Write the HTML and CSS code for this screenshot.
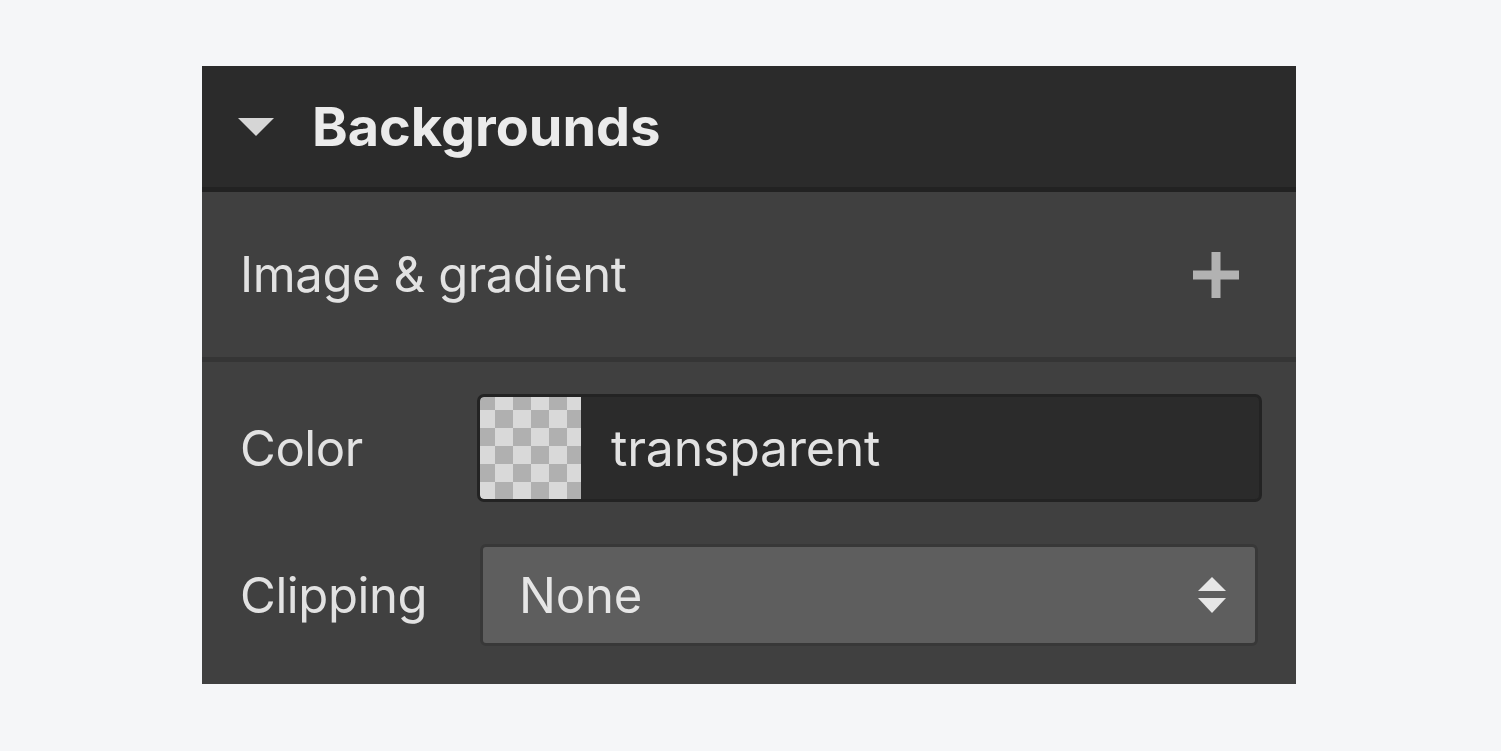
FILE: index.html
```html
<!DOCTYPE html>
<html>
<head>
<meta charset="utf-8">
<link rel="stylesheet" href="styles.css">
</head>
<body>
<div class="panel">
  <div class="header">
    <span class="caret"></span>
    <span class="title">Backgrounds</span>
  </div>
  <div class="section">
    <span class="label">Image &amp; gradient</span>
    <svg class="plus" width="46" height="46" viewBox="0 0 46 46"><rect x="18.5" y="0" width="9" height="46" fill="#b2b2b2"/><rect x="0" y="18.5" width="46" height="9" fill="#b2b2b2"/></svg>
  </div>
  <div class="props">
    <span class="label">Color</span>
    <div class="color-input">
      <span class="swatch"></span>
      <span class="value">transparent</span>
    </div>
    <span class="label">Clipping</span>
    <div class="select">
      <span class="value">None</span>
      <svg class="updown" width="28" height="36" viewBox="0 0 28 36"><polygon points="14,0 28,14 0,14" fill="#e6e6e6"/><polygon points="0,21 28,21 14,36" fill="#e6e6e6"/></svg>
    </div>
  </div>
</div>
</body>
</html>
```
FILE: styles.css
```css
html, body {
  margin: 0;
  padding: 0;
  background: #f5f6f8;
}
body {
  font-family: Inter, "Noto Sans", sans-serif;
  width: 1501px;
  height: 751px;
  overflow: hidden;
}
.panel {
  margin: 66px 0 0 202px;
  width: 1094px;
  height: 618px;
  background: #404040;
  display: flex;
  flex-direction: column;
}
.header {
  height: 121px;
  background: #2b2b2b;
  border-bottom: 5px solid #222222;
  display: flex;
  align-items: center;
  padding-left: 36px;
}
.caret {
  width: 0;
  height: 0;
  border-left: 18.5px solid transparent;
  border-right: 18.5px solid transparent;
  border-top: 18px solid #d6d6d6;
  margin-right: 38px;
}
.title {
  font-size: 54px;
  font-weight: 700;
  color: #ebebeb;
}
.section {
  height: 165px;
  border-bottom: 5px solid #353535;
  display: flex;
  align-items: center;
  justify-content: space-between;
  padding: 0 57px 0 38px;
}
.label {
  font-size: 49px;
  letter-spacing: -0.4px;
  color: #e2e2e2;
}
.plus {
  display: block;
}
.props {
  display: grid;
  grid-template-columns: 237px 1fr;
  grid-template-rows: 108px 102px;
  row-gap: 42px;
  align-items: center;
  padding: 32px 34px 0 38px;
}
.color-input {
  height: 108px;
  box-sizing: border-box;
  border: 3px solid #232323;
  border-radius: 7px;
  background: #2b2b2b;
  display: flex;
  align-items: center;
  overflow: hidden;
}
.swatch {
  width: 101px;
  height: 100%;
  background: repeating-conic-gradient(#d9d9d9 0 25%, #b0b0b0 0 50%);
  background-size: 36px 36px;
  background-position: -3px -5px;
  border-radius: 4px 0 0 4px;
}
.color-input .value {
  margin-left: 30px;
  font-size: 50px;
  letter-spacing: -0.2px;
  color: #e2e2e2;
}
.select {
  height: 102px;
  margin: 0 4px 0 3px;
  box-sizing: border-box;
  border: 3px solid #383838;
  border-radius: 6px;
  background: #5e5e5e;
  display: flex;
  align-items: center;
  justify-content: space-between;
  padding: 0 29px 0 36px;
}
.select .value {
  font-size: 49px;
  letter-spacing: -0.2px;
  color: #e6e6e6;
}
.updown {
  display: block;
}
```
